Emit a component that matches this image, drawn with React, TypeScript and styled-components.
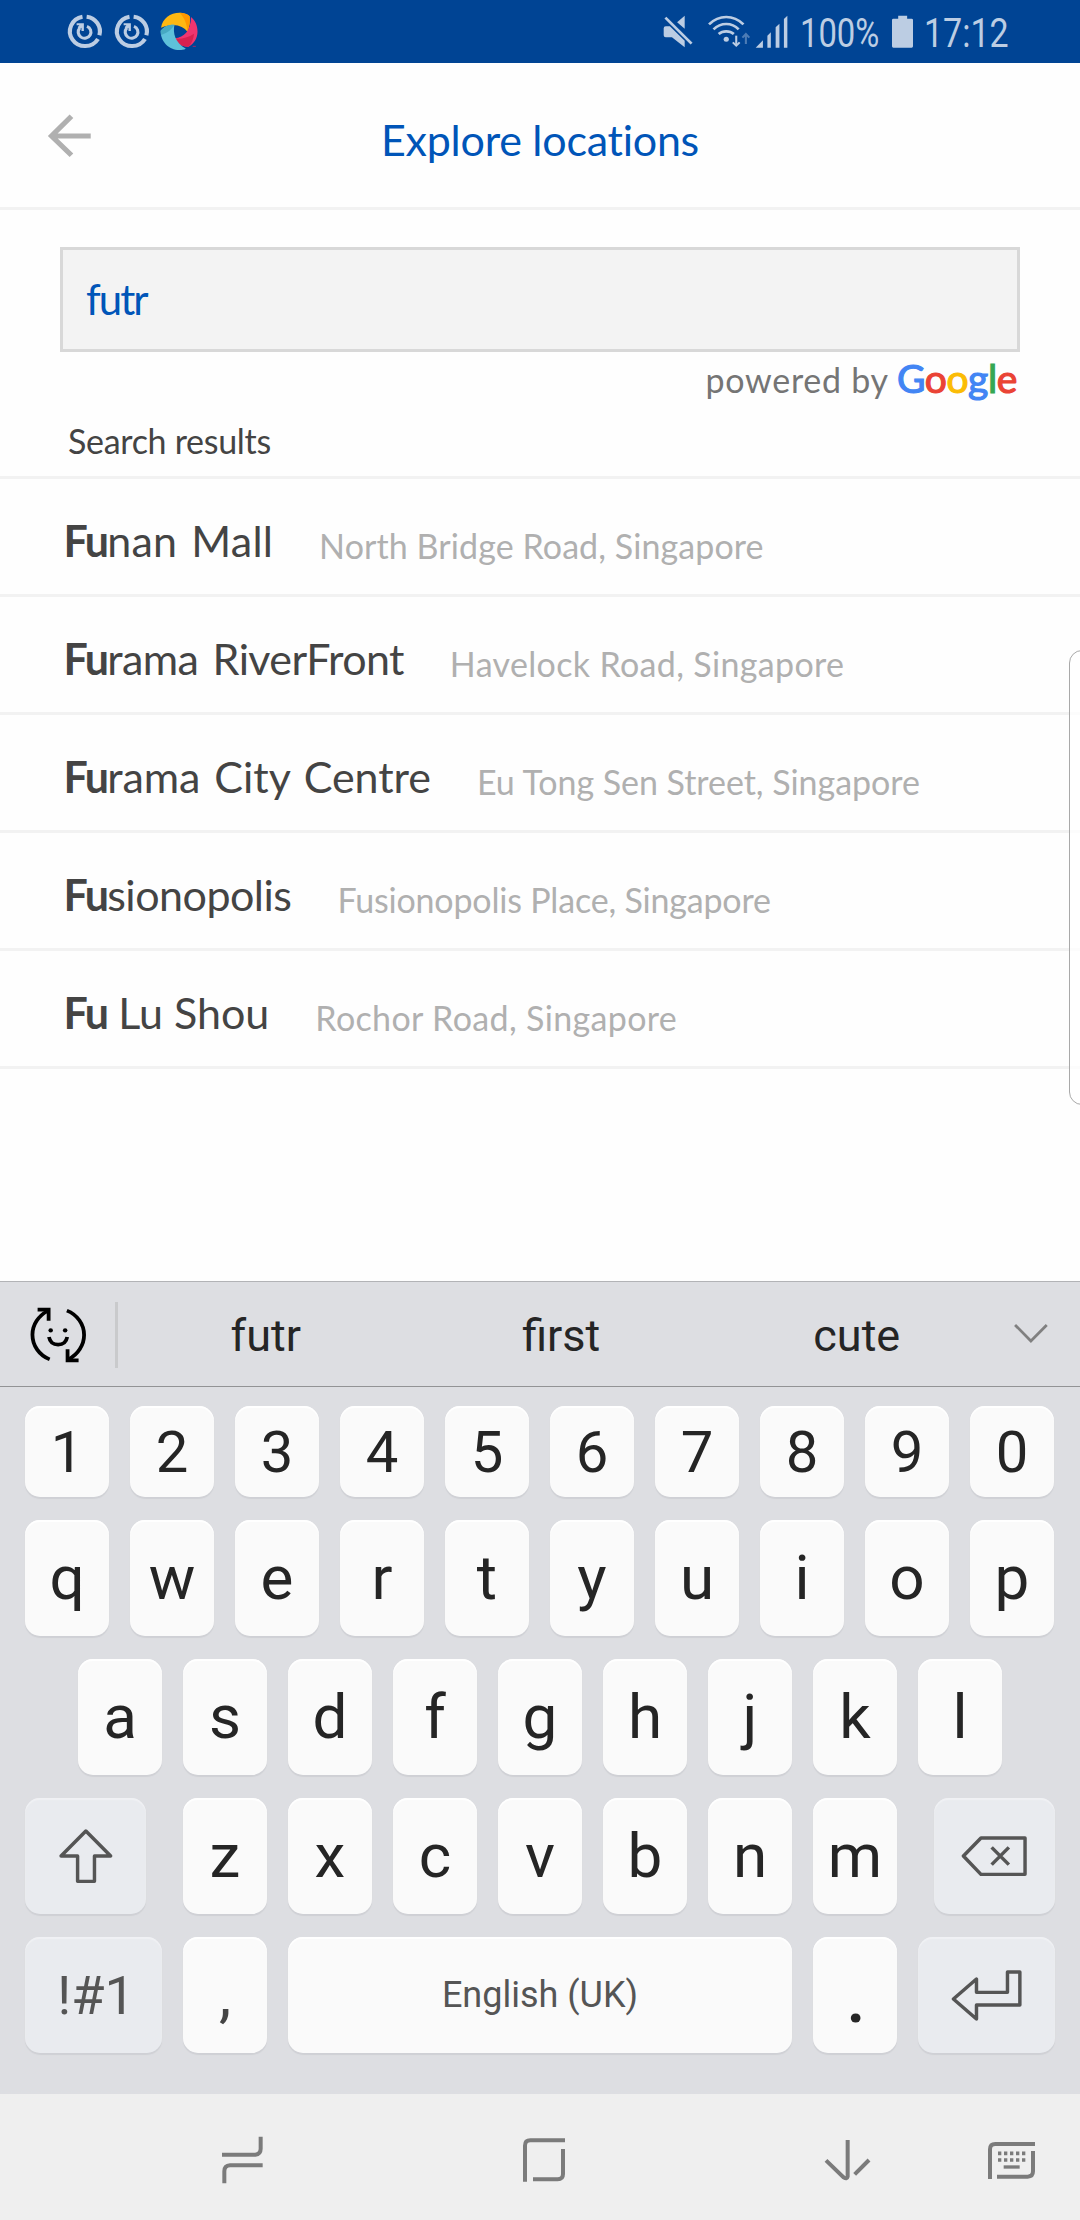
import React from "react";
import styled, { createGlobalStyle } from "styled-components";

const GlobalStyle = createGlobalStyle`
  *, *::before, *::after { box-sizing: border-box; }
  body { margin: 0; background: #fefefe; }
`;

const GEO = `Lato, "Open Sans", sans-serif`;
const SYS = `Roboto, "Noto Sans", sans-serif`;

const Screen = styled.div`
  position: relative;
  display: flex;
  flex-direction: column;
  width: 1080px;
  height: 2220px;
  overflow: hidden;
  background: #fefefe;
  font-variant-ligatures: none;
`;

/* ---------- status bar ---------- */

const StatusBar = styled.header`
  display: flex;
  align-items: flex-start;
  height: 63px;
  flex: none;
  background: #004494;
  color: #bccde3;
`;

const StatusText = styled.span<{ $width: number; $squeeze: number; $gap: number }>`
  width: ${(p) => p.$width}px;
  margin-left: ${(p) => p.$gap}px;
  font: 400 40px/47px ${SYS};
  padding-top: 10px;
  white-space: nowrap;
  transform: scaleX(${(p) => p.$squeeze});
  transform-origin: left;
`;

const Glyph = styled.svg<{ $gap?: number }>`
  display: block;
  flex: none;
  margin-left: ${(p) => p.$gap ?? 0}px;
  overflow: visible;
`;

/* Icons are drawn on a fine grid of 2.904 x 3 units per pixel. */
type IconProps = { box: [number, number, number, number]; gap?: number; children: React.ReactNode };
const Icon = ({ box, gap, children }: IconProps) => (
  <Glyph
    $gap={gap}
    width={box[2] / 2.9037}
    height={box[3] / 3}
    viewBox={box.join(" ")}
    preserveAspectRatio="none"
    fill="none"
  >
    {children}
  </Glyph>
);

const SyncIcon = ({ gap }: { gap: number }) => (
  <Icon box={[194, 0, 102, 189]} gap={gap}>
    <g stroke="#bccde3">
      <path d="M239 50A44 44.500 0 1 0 284 117" strokeWidth="12" />
      <path d="M251 50A44 44.500 0 0 1 288 106" strokeWidth="12" />
      <path d="M252 79A18.500 18.500 0 1 1 231 84" strokeWidth="9" />
    </g>
    <path d="M222 70H243V93H236V83L231 88L225 82L230 76H222Z" fill="#bccde3" />
  </Icon>
);

/* ---------- app header ---------- */

const AppBar = styled.div`
  display: grid;
  grid-template-columns: 140px 1fr 140px;
  height: 147px;
  flex: none;
  border-bottom: 3px solid #f2f2f2;
`;

const BackButton = styled.button`
  display: flex;
  align-items: flex-start;
  padding: 48px 0 0 47px;
  border: 0;
  background: none;
`;

const Title = styled.h1`
  margin: 0;
  padding-top: 51px;
  text-align: center;
  font: 400 43px/52px ${GEO};
  letter-spacing: -0.25px;
  color: #0055b8;
`;

/* ---------- search ---------- */

const SearchArea = styled.section`
  display: flex;
  flex-direction: column;
  height: 269px;
  flex: none;
  padding: 37px 60px 0;
  border-bottom: 3px solid #f2f2f2;
`;

const SearchField = styled.input`
  width: 960px;
  height: 105px;
  flex: none;
  padding: 0 23px 2px;
  border: 3px solid #d8d8d8;
  border-radius: 0;
  outline: none;
  background: #f3f3f3;
  font: 400 42px/52px ${GEO};
  letter-spacing: -2px;
  color: #0055b8;
`;

const Attribution = styled.div`
  display: flex;
  justify-content: flex-end;
  align-items: baseline;
  height: 56px;
  padding: 4px 3px 0 0;
  gap: 8px;
  white-space: nowrap;
`;

const PoweredBy = styled.span`
  font: 400 34px/44px ${GEO};
  letter-spacing: 0.75px;
  color: #757575;
`;

const Wordmark = styled.span`
  font: 400 39px/44px ${GEO};
  letter-spacing: -0.4px;
  -webkit-text-stroke: 1.2px currentColor;
`;

const Tint = styled.span<{ $c: string }>`
  color: ${(p) => p.$c};
`;

const ListLabel = styled.h2`
  margin: 0;
  padding: 11px 0 0 8px;
  font: 400 34px/44px ${GEO};
  letter-spacing: -0.3px;
  color: #444;
`;

/* ---------- results ---------- */

const Results = styled.ul`
  margin: 0;
  padding: 0;
  list-style: none;
  height: 802px;
  flex: none;
`;

const ResultRow = styled.li`
  display: flex;
  align-items: flex-start;
  gap: 46px;
  height: 118px;
  padding-left: 63.500px;
  border-bottom: 3px solid #f2f2f2;
  white-space: nowrap;
`;

const Place = styled.span<{ $track: number; $space: number }>`
  padding-top: 36px;
  font: 400 43px/52px ${GEO};
  letter-spacing: ${(p) => p.$track}px;
  word-spacing: ${(p) => p.$space}px;
  color: #444;
`;

const Match = styled.b`
  font-weight: 700;
  letter-spacing: -1.7px;
`;

const Address = styled.span<{ $track: number }>`
  padding-top: 47px;
  font: 400 34px/40px ${GEO};
  letter-spacing: ${(p) => p.$track}px;
  color: #b0b0b0;
`;

const EdgeHandle = styled.div`
  position: absolute;
  left: 1069px;
  top: 650px;
  width: 26px;
  height: 455px;
  border: 1.500px solid #a9a9a9;
  border-radius: 15px;
  background: rgba(255, 255, 255, 0.75);
`;

/* ---------- keyboard ---------- */

const Keyboard = styled.section`
  display: flex;
  flex-direction: column;
  height: 813px;
  flex: none;
  border-top: 1px solid #b2b3b6;
  background: #dddee2;
`;

const Suggestions = styled.div`
  display: flex;
  height: 105px;
  flex: none;
  border-bottom: 1px solid #929395;
`;

const EmojiSwitch = styled.div`
  width: 115px;
  padding: 24px 0 0 29px;
`;

const Divider = styled.div`
  width: 3px;
  height: 66px;
  margin-top: 20px;
  background: #c9cacc;
`;

const Suggestion = styled.div`
  width: 295.500px;
  text-align: center;
  font: 400 45px/54px ${SYS};
  padding-top: 27px;
  color: #252525;
`;

const Expand = styled.div`
  padding: 41px 0 0 8px;
`;

const Rows = styled.div`
  display: flex;
  flex-direction: column;
  gap: 23px;
  padding: 19px 25px 0;
`;

const KeyRow = styled.div<{ $inset?: number }>`
  display: flex;
  gap: 21px;
  padding-left: ${(p) => p.$inset ?? 0}px;
`;

const Key = styled.button<{
  $w?: number;
  $h?: number;
  $size?: number;
  $weight?: number;
  $quiet?: boolean;
  $ink?: string;
  $before?: number;
  $drop?: number;
  $shift?: number;
}>`
  display: flex;
  flex: none;
  align-items: center;
  justify-content: center;
  width: ${(p) => p.$w ?? 84}px;
  height: ${(p) => p.$h ?? 116}px;
  margin: 0 0 0 ${(p) => p.$before ?? 0}px;
  padding: ${(p) => p.$drop ?? 0}px 0 0 ${(p) => p.$shift ?? 0}px;
  border: 0;
  border-radius: 15px;
  background: ${(p) => (p.$quiet ? "#e9ebef" : "#fafafa")};
  box-shadow: inset 0 2px 1px ${(p) => (p.$quiet ? "#f0f1f4" : "#fff")}, 0 1.500px 1px #cfd0d5;
  font: ${(p) => p.$weight ?? 400} ${(p) => p.$size ?? 62}px/1 ${SYS};
  color: ${(p) => p.$ink ?? "#252525"};
`;

/* ---------- navigation bar ---------- */

const NavBar = styled.nav`
  display: flex;
  align-items: flex-start;
  height: 126px;
  flex: none;
  padding-top: 36px;
  background: #efefef;
`;

const NavIcon = ({ box, gap, children }: IconProps) => (
  <Glyph
    $gap={gap}
    width={box[2] / 3}
    height={box[3] / 3}
    viewBox={box.join(" ")}
    fill="none"
    stroke="#7b7b7b"
    strokeWidth="12"
  >
    {children}
  </Glyph>
);

const places = [
  { rest: "nan Mall", address: "North Bridge Road, Singapore", track: 0.2, space: 3, addressTrack: 0.09 },
  { rest: "rama RiverFront", address: "Havelock Road, Singapore", track: -0.6, space: 4, addressTrack: 0.34 },
  { rest: "rama City Centre", address: "Eu Tong Sen Street, Singapore", track: -0.05, space: 3, addressTrack: -0.04 },
  { rest: "sionopolis", address: "Fusionopolis Place, Singapore", track: -0.5, space: 0, addressTrack: -0.19 },
  { rest: " Lu Shou", address: "Rochor Road, Singapore", track: 0, space: 0, addressTrack: 0.35 },
];

export default function App() {
  return (
    <Screen>
      <GlobalStyle />
      <StatusBar>
        <SyncIcon gap={67} />
        <SyncIcon gap={12} />
        <Icon box={[463, 0, 112, 189]} gap={10.500}>
          <path d="M466 83C470 55 493 38 520 38C532 38 543 42 549 49C551 64 549 80 543 95C530 78 504 66 466 83Z" fill="#fdb813" />
          <path d="M520 38C532 38 543 42 549 49C551 64 549 80 543 95C541 72 535 54 520 38Z" fill="#ff9800" />
          <path d="M553 51C566 62 572 78 572 95C572 114 562 130 546 140C527 141 511 131 506 115C533 113 553 91 553 51Z" fill="#f0356f" />
          <path d="M506 115C520 119 543 113 562 101C560 118 554 132 546 140C527 141 511 131 506 115Z" fill="#d8214f" />
          <path d="M465 92C474 80 488 73 505 74C500 98 506 127 538 146C532 149 526 150 519 150C489 150 464 124 465 92Z" fill="#5ec1da" />
          <path d="M465 92C474 80 488 73 505 74C499 85 487 98 466 105Z" fill="#46a9c2" />
          <path d="M558 139H567" stroke="#a02a68" strokeWidth="3" />
        </Icon>
        <Icon box={[355, 0, 88, 189]} gap={465}>
          <g fill="#bccde3">
            <path d="M357 85Q357 79 363 79H375L418 122V142L381 112H363Q357 112 357 106Z" />
            <path d="M418 47V86L396 67Z" />
          </g>
          <path d="M362 53L438 131" stroke="#bccde3" strokeWidth="8" />
        </Icon>
        <Icon box={[484, 0, 126, 189]} gap={14}>
          <g stroke="#bccde3" strokeWidth="8">
            <path d="M487 73Q509 51 537 51T587 73" />
            <path d="M500 88Q516 72 537 72T573 88" />
            <path d="M515 102Q524 94 537 94T559 102" />
            <path d="M566 107V134" strokeWidth="6" />
            <path d="M556 127L566 137L576 127" strokeWidth="6" />
            <path d="M594 132V105M584 113L594 102L604 113" stroke="#4d7cb5" strokeWidth="6" />
          </g>
          <circle cx="537" cy="118" r="7.500" fill="#bccde3" />
        </Icon>
        <Icon box={[620, 0, 96, 189]} gap={3.500}>
          <path d="M622 143L643 121V143ZM656 107L666 97V143H656ZM680 82L691 71V143H680ZM704 57L714 47V143H704Z" fill="#bccde3" />
        </Icon>
        <StatusText $width={80} $squeeze={0.82} $gap={12}>100%</StatusText>
        <Icon box={[1019, 0, 61, 189]} gap={12.500}>
          <path d="M1037 47H1063V56H1076Q1080 56 1080 60V139Q1080 143 1076 143H1023Q1019 143 1019 139V60Q1019 56 1023 56H1037Z" fill="#bccde3" />
        </Icon>
        <StatusText $width={90} $squeeze={0.85} $gap={11}>17:12</StatusText>
      </StatusBar>

      <AppBar>
        <BackButton aria-label="Back">
          <Icon box={[134, 333, 130, 150]}>
            <path d="M205 349L147 408L205 466M147 408H261" stroke="#b0b0b0" strokeWidth="15" />
          </Icon>
        </BackButton>
        <Title>Explore locations</Title>
      </AppBar>

      <SearchArea>
        <SearchField value="futr" readOnly />
        <Attribution>
          <PoweredBy>powered by</PoweredBy>
          <Wordmark>
            <Tint $c="#4285f4">G</Tint>
            <Tint $c="#ea4335">o</Tint>
            <Tint $c="#fbbc05">o</Tint>
            <Tint $c="#4285f4">g</Tint>
            <Tint $c="#34a853">l</Tint>
            <Tint $c="#ea4335">e</Tint>
          </Wordmark>
        </Attribution>
        <ListLabel>Search results</ListLabel>
      </SearchArea>

      <Results>
        {places.map((p) => (
          <ResultRow key={p.rest}>
            <Place $track={p.track} $space={p.space}>
              <Match>Fu</Match>
              {p.rest}
            </Place>
            <Address $track={p.addressTrack}>{p.address}</Address>
          </ResultRow>
        ))}
      </Results>
      <EdgeHandle />

      <Keyboard>
        <Suggestions>
          <EmojiSwitch>
            <Icon box={[84, 105, 170, 172]}>
              <g stroke="#000" strokeWidth="11">
                <path d="M144 265C114 253 94 224 94 191C94 161 112 134 138 120" />
                <path d="M194 119C224 131 244 160 244 192C244 222 226 250 200 264" />
                <path d="M109 116H141V149" />
                <path d="M228 268H196V235" />
                <path d="M142 198C145 214 156 221 168.500 221S192 214 195 198" />
              </g>
              <circle cx="147" cy="178" r="6.500" fill="#000" />
              <circle cx="189" cy="178" r="6.500" fill="#000" />
            </Icon>
          </EmojiSwitch>
          <Divider />
          <Suggestion>futr</Suggestion>
          <Suggestion>first</Suggestion>
          <Suggestion>cute</Suggestion>
          <Expand>
            <Icon box={[1374, 158, 104, 62]}>
              <path d="M1380 164L1426 212L1472 164" stroke="#808080" strokeWidth="8" />
            </Icon>
          </Expand>
        </Suggestions>
        <Rows>
          <KeyRow>
            {[..."1234567890"].map((c) => (
              <Key key={c} $h={91} $size={58}>{c}</Key>
            ))}
          </KeyRow>
          <KeyRow>
            {[..."qwertyuiop"].map((c) => (
              <Key key={c}>{c}</Key>
            ))}
          </KeyRow>
          <KeyRow $inset={53}>
            {[..."asdfghjkl"].map((c) => (
              <Key key={c}>{c}</Key>
            ))}
          </KeyRow>
          <KeyRow>
            <Key $w={121} $quiet aria-label="Shift">
              <Icon box={[170, 566, 156, 164]}>
                <path d="M248 572L320 647H273V723H224V647H176Z" stroke="#555" strokeWidth="10" strokeLinejoin="round" />
              </Icon>
            </Key>
            {[..."zxcvbnm"].map((c) => (
              <Key key={c} $before={c === "z" ? 16 : 0}>{c}</Key>
            ))}
            <Key $w={121} $before={16} $quiet aria-label="Backspace">
              <Icon box={[1223, 588, 193, 121]}>
                <path
                  d="M1230 648L1281 594H1409V703H1281ZM1312 622L1362 674M1362 622L1312 674"
                  stroke="#555"
                  strokeWidth="10"
                  strokeLinejoin="round"
                />
              </Icon>
            </Key>
          </KeyRow>
          <KeyRow>
            <Key $w={137} $quiet $size={54} $ink="#555" $drop={2} $shift={5}>!#1</Key>
            <Key $ink="#444">,</Key>
            <Key $w={504} $size={36} $ink="#555">English (UK)</Key>
            <Key $size={70} $weight={500} $drop={6} $shift={2}>.</Key>
            <Key $w={137} $quiet aria-label="Enter">
              <Icon box={[1193, 989, 206, 153]}>
                <path
                  d="M1200 1076L1267 1016V1056H1357V995H1393V1094H1267V1136Z"
                  stroke="#555"
                  strokeWidth="10"
                  strokeLinejoin="round"
                />
              </Icon>
            </Key>
          </KeyRow>
        </Rows>
      </Keyboard>

      <NavBar>
        <NavIcon box={[120, 150, 135, 180]} gap={220}>
          <path d="M126 224H226Q242 222 242 206V170" />
          <path d="M248 256H150Q133 257 133 274V310" />
        </NavIcon>
        <NavIcon box={[1020, 150, 141, 180]} gap={255}>
          <path d="M1035 305V197Q1035 181 1051 181H1155" />
          <path d="M1149 207V282Q1149 298 1133 298H1059" />
        </NavIcon>
        <NavIcon box={[579, 150, 147, 180]} gap={256}>
          <path d="M653 180V290Q651 299 641 292L588 241" />
          <path d="M717 240L674 283" />
        </NavIcon>
        <NavIcon box={[1068, 150, 153, 180]} gap={114}>
          <path d="M1080 297V208Q1080 192 1096 192H1215" />
          <path d="M1209 213V274Q1209 290 1193 290H1101" />
          <path d="M1104 220H1188M1104 240H1188" strokeWidth="11" strokeDasharray="10 8" />
          <path d="M1121 261H1169" strokeWidth="10" />
        </NavIcon>
      </NavBar>
    </Screen>
  );
}
